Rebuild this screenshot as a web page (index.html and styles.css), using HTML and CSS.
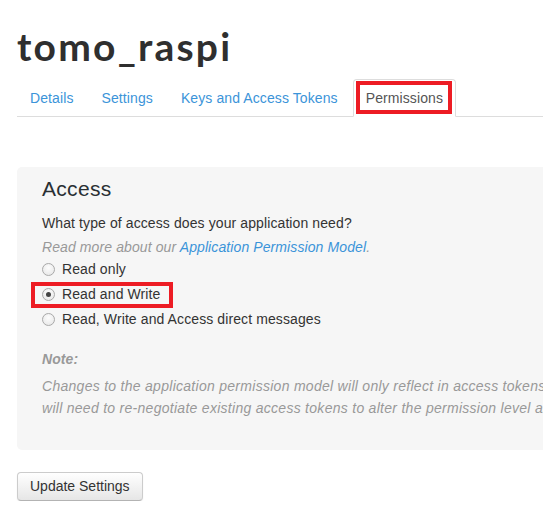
FILE: index.html
```html
<!DOCTYPE html>
<html>
<head>
<meta charset="utf-8">
<link rel="stylesheet" href="styles.css">
</head>
<body>
<div class="page">
  <h1 class="title">tomo_raspi</h1>
  <ul class="tabs">
    <li class="tab"><a href="#">Details</a></li>
    <li class="tab"><a href="#">Settings</a></li>
    <li class="tab"><a href="#">Keys and Access Tokens</a></li>
    <li class="tab active"><a href="#">Permissions<span class="mark mark-tab"></span></a></li>
  </ul>

  <div class="panel">
    <h2 class="panel-title">Access</h2>
    <p class="question">What type of access does your application need?</p>
    <p class="hint">Read more about our <a href="#">Application Permission Model</a>.</p>
    <div class="options">
      <label class="option"><span class="radio"></span>Read only</label>
      <label class="option"><span class="radio checked"></span>Read and Write<span class="mark mark-option"></span></label>
      <label class="option"><span class="radio"></span>Read, Write and Access direct messages</label>
    </div>
    <p class="note-title">Note:</p>
    <p class="note">Changes to the application permission model will only reflect in access tokens obtained after the permission model change is saved. You<br>will need to re-negotiate existing access tokens to alter the permission level associated with each of your application's users.</p>
  </div>

  <button class="btn" type="button">Update Settings</button>
</div>
</body>
</html>
```

FILE: styles.css
```css
html, body {
  margin: 0;
  padding: 0;
  background: #fff;
  overflow: hidden;
}

body {
  font-family: "Liberation Sans", Arial, sans-serif;
  font-size: 14px;
  color: #333;
}

.page {
  padding-left: 17px;
  width: 1100px;
  letter-spacing: 0.1px;
}

.title {
  font-family: Lato, "Liberation Sans", sans-serif;
  font-weight: 700;
  font-size: 39px;
  line-height: 44px;
  letter-spacing: 2.2px;
  color: #2f2f2f;
  margin: 24px 0 11px 0;
}

.tabs {
  list-style: none;
  margin: 0;
  padding: 0;
  display: flex;
  border-bottom: 1px solid #ddd;
}

.tab {
  margin-bottom: -1px;
}

.tab a {
  position: relative;
  display: block;
  padding: 8px 12px;
  line-height: 20px;
  margin-right: 2px;
  border: 1px solid transparent;
  border-radius: 4px 4px 0 0;
  color: #3b94d9;
  text-decoration: none;
}

.tab.active a {
  color: #555;
  background: #fff;
  border-color: #ddd #ddd transparent #ddd;
}

.mark {
  position: absolute;
  box-sizing: border-box;
  border: 4px solid #ed1c24;
  pointer-events: none;
}

.mark-tab {
  left: 2px;
  top: 1px;
  width: 96px;
  height: 33px;
}

.panel {
  margin-top: 50px;
  background: #f6f6f6;
  border-radius: 5px;
  padding: 10px 25px 31px 25px;
}

.panel-title {
  font-size: 21px;
  font-weight: 400;
  line-height: 24px;
  margin: 0;
  color: #292f33;
  letter-spacing: 0.3px;
}

.question {
  margin: 12px 0 0 0;
  line-height: 20px;
}

.hint {
  margin: 4px 0 0 0;
  line-height: 20px;
  font-style: italic;
  color: #999;
}

.hint a {
  color: #3b94d9;
  text-decoration: none;
}

.options {
  display: flex;
  flex-direction: column;
}

.option {
  position: relative;
  display: flex;
  align-items: center;
  height: 25px;
  line-height: 25px;
}

.radio {
  box-sizing: border-box;
  width: 13px;
  height: 13px;
  border-radius: 50%;
  border: 1px solid #a9a9a9;
  background: radial-gradient(circle at 50% 35%, #fdfdfd 0%, #e4e4e4 100%);
  margin-right: 7px;
  display: flex;
  align-items: center;
  justify-content: center;
}

.radio.checked::after {
  content: "";
  width: 5px;
  height: 5px;
  border-radius: 50%;
  background: #444;
}

.mark-option {
  left: -11px;
  top: 0;
  width: 142px;
  height: 26px;
}

.note-title {
  margin: 17px 0 0 0;
  line-height: 20px;
  font-weight: 700;
  font-style: italic;
  color: #999;
}

.note {
  margin: 6px 0 0 0;
  line-height: 22px;
  font-style: italic;
  color: #999;
  white-space: nowrap;
  letter-spacing: 0.28px;
}

.btn {
  margin-top: 22px;
  font-family: "Liberation Sans", Arial, sans-serif;
  font-size: 14px;
  line-height: 15px;
  letter-spacing: 0;
  color: #333;
  padding: 6px 12px;
  border: 1px solid #ccc;
  border-bottom-color: #b3b3b3;
  border-radius: 4px;
  background: linear-gradient(#ffffff, #e6e6e6);
  box-shadow: inset 0 1px 0 rgba(255,255,255,.2), 0 1px 2px rgba(0,0,0,.05);
}
```
